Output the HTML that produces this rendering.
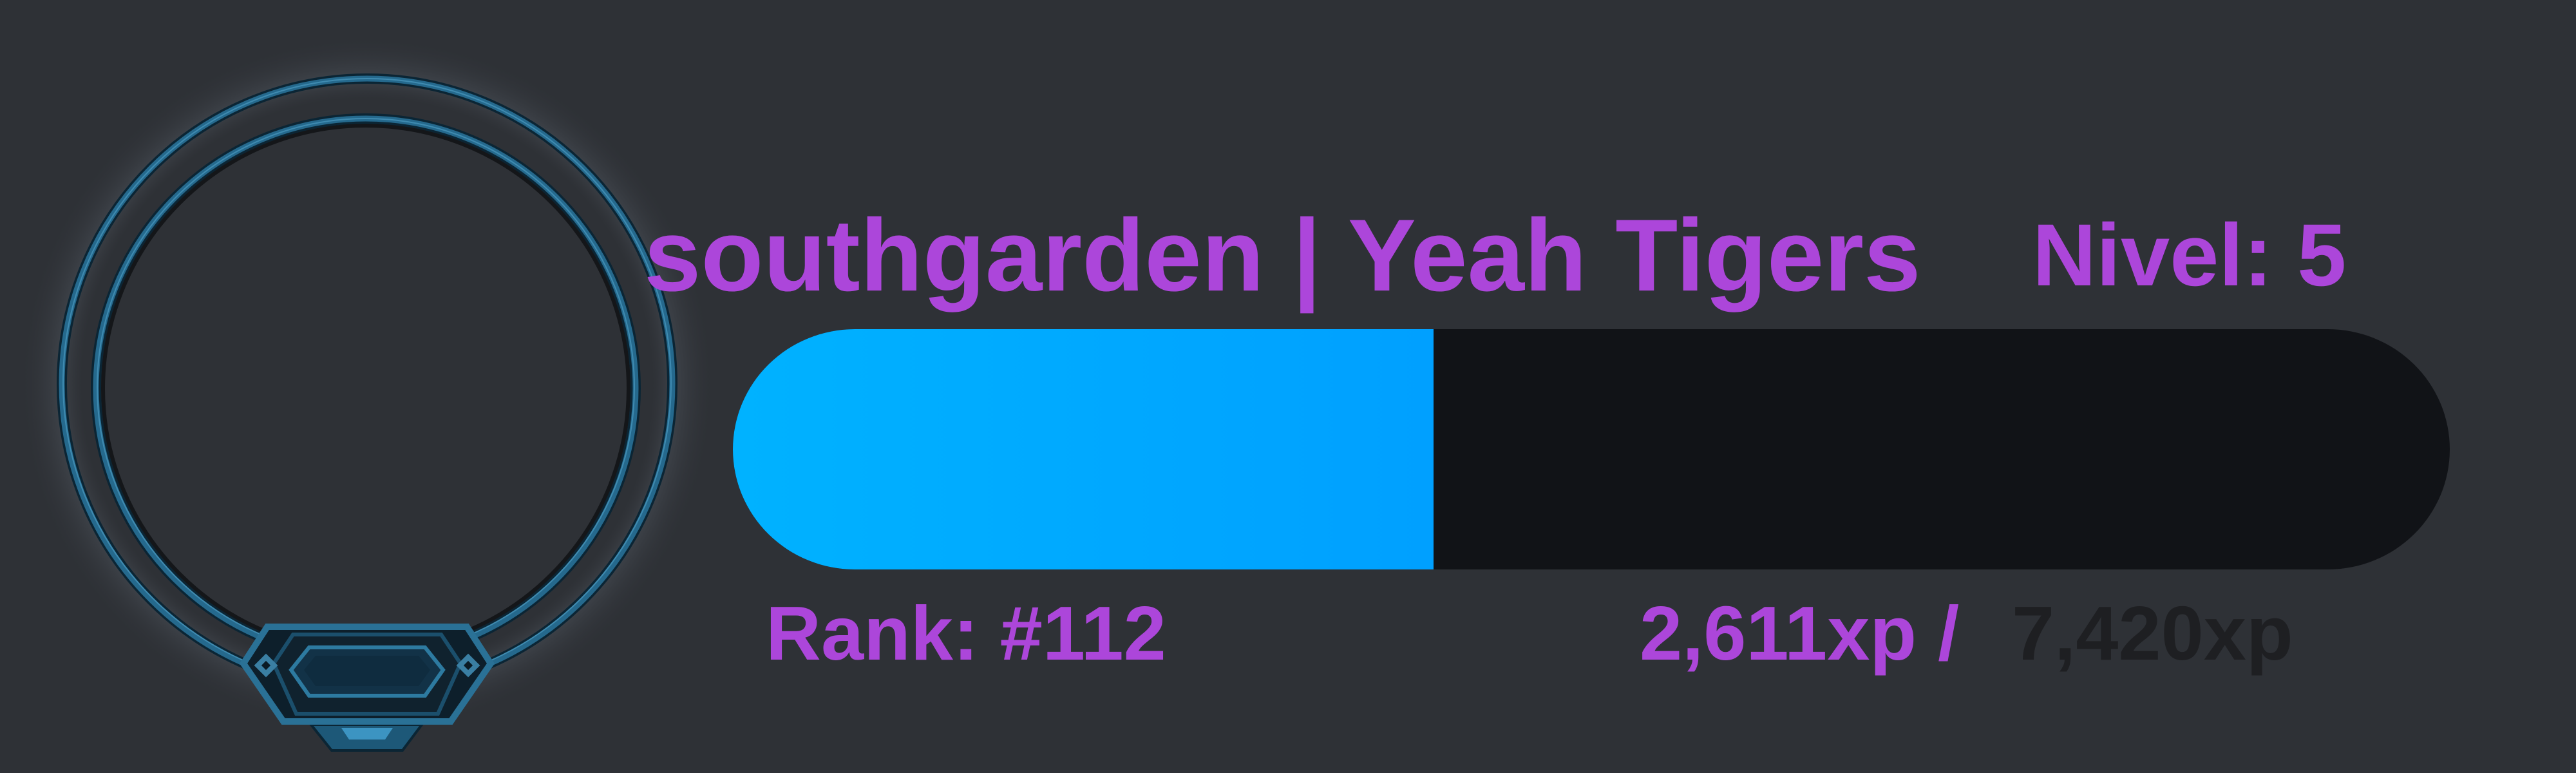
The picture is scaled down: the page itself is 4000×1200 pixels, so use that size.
<!DOCTYPE html>
<html><head><meta charset="utf-8"><style>
html,body{margin:0;padding:0}
body{width:4000px;height:1200px;background:#2e3136;position:relative;overflow:hidden;font-family:"Liberation Sans",Arial,sans-serif;font-weight:bold}
.t{position:absolute;white-space:nowrap;color:#ac46da;line-height:1}
.bar{position:absolute;left:1138px;top:511px;width:2666px;height:373px;background:#111317;border-radius:190px/187px;overflow:hidden}
.fill{position:absolute;left:0;top:0;width:1088px;height:100%;background:linear-gradient(90deg,#00b2ff,#00a0ff)}
</style></head><body>
<svg width="1200" height="1200" style="position:absolute;left:0;top:0">
<defs>
<radialGradient id="glow" cx="570" cy="596" r="540" gradientUnits="userSpaceOnUse">
<stop offset="0.82" stop-color="#3a3e44" stop-opacity="0"/>
<stop offset="0.88" stop-color="#4a5058" stop-opacity="0.6"/>
<stop offset="1" stop-color="#2e3136" stop-opacity="0"/>
</radialGradient>
</defs>
<circle cx="570" cy="596" r="540" fill="url(#glow)"/>
<circle cx="570" cy="596" r="474" fill="none" stroke="#0b2534" stroke-width="16"/>
<circle cx="570" cy="596" r="474" fill="none" stroke="#25698d" stroke-width="9"/>
<circle cx="570" cy="594" r="472" fill="none" stroke="#4a9ac0" stroke-width="2" opacity=".7"/>
<circle cx="568" cy="603" r="419" fill="none" stroke="#0b2534" stroke-width="16"/>
<circle cx="568" cy="603" r="419" fill="none" stroke="#25698d" stroke-width="9"/>
<circle cx="568" cy="601" r="417" fill="none" stroke="#4a9ac0" stroke-width="2" opacity=".7"/>
<circle cx="568" cy="603" r="408" fill="none" stroke="#141619" stroke-width="6"/>
<polygon points="483,1125 655,1125 625,1165 515,1165" fill="#1d5878" stroke="#0b2534" stroke-width="4"/>
<polygon points="530,1130 610,1130 598,1148 542,1148" fill="#3c94c2"/>
<polygon points="415,973 725,973 762,1030 700,1120 440,1120 378,1030" fill="#0d1f2b" stroke="#2a7196" stroke-width="10"/>
<polygon points="455,985 685,985 715,1030 680,1108 460,1108 425,1030" fill="#10222e" stroke="#1b4f6c" stroke-width="6"/>
<polygon points="480,1005 660,1005 688,1040 660,1080 480,1080 452,1040" fill="#123247" stroke="#2d7aa0" stroke-width="6"/>
<polygon points="490,1018 650,1018 668,1040 650,1065 490,1065 472,1040" fill="#0f2c3f"/>
<rect x="400" y="1020" width="26" height="26" fill="#3a7fa3" transform="rotate(45 413 1033)"/>
<rect x="408" y="1028" width="10" height="10" fill="#0a1a24" transform="rotate(45 413 1033)"/>
<rect x="714" y="1020" width="26" height="26" fill="#3a7fa3" transform="rotate(45 727 1033)"/>
<rect x="722" y="1028" width="10" height="10" fill="#0a1a24" transform="rotate(45 727 1033)"/>
</svg>
<div class="t" style="left:1000px;top:317px;font-size:159px">southgarden | Yeah Tigers</div>
<div class="t" style="left:3156px;top:328px;font-size:137px">Nivel: 5</div>
<div class="bar"><div class="fill"></div></div>
<div class="t" style="left:1189px;top:924px;font-size:119px">Rank: #112</div>
<div class="t" style="left:2546px;top:924px;font-size:119px">2,611xp / </div>
<div class="t" style="left:3124px;top:924px;font-size:119px;color:#1e1f22">7,420xp</div>
</body></html>
